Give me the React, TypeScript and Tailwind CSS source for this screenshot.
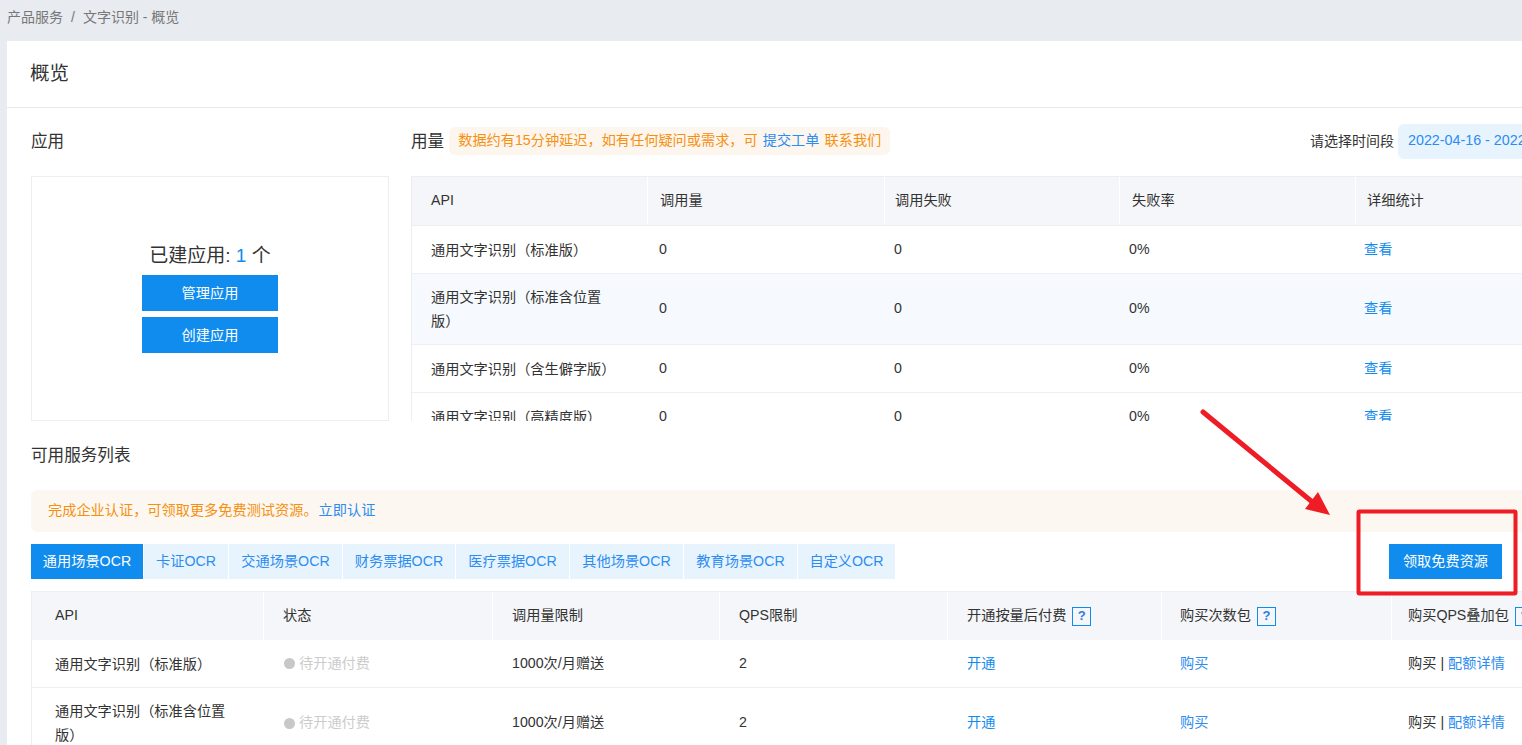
const font = '[font-family:"Liberation_Sans","Noto_Sans_CJK_SC",sans-serif]';

const usageRows = [
    { name: ['通用文字识别（标准版）'], tall: false, shade: false },
    { name: ['通用文字识别（标准含位置', '版）'], tall: true, shade: true },
    { name: ['通用文字识别（含生僻字版）'], tall: false, shade: false },
    { name: ['通用文字识别（高精度版）'], tall: false, shade: false },
];

const tabs = [
    { label: '通用场景OCR', width: 'w-[112px]', active: true },
    { label: '卡证OCR', width: 'w-[84px]', active: false },
    { label: '交通场景OCR', width: 'w-[113px]', active: false },
    { label: '财务票据OCR', width: 'w-[112px]', active: false },
    { label: '医疗票据OCR', width: 'w-[113px]', active: false },
    { label: '其他场景OCR', width: 'w-[113px]', active: false },
    { label: '教育场景OCR', width: 'w-[113px]', active: false },
    { label: '自定义OCR', width: 'w-[97px]', active: false },
];

const serviceRows = [
    { name: ['通用文字识别（标准版）'], tall: false },
    { name: ['通用文字识别（标准含位置', '版）'], tall: true },
];

function HelpBox() {
    return (
        <span className="ml-[6px] inline-flex h-[19px] w-[19px] items-center justify-center border border-[#108cee] text-[13px] font-bold text-[#2b7fe0]">
            ?
        </span>
    );
}

function HeadCell({ children, className }: { children: React.ReactNode; className: string }) {
    return <div className={`flex shrink-0 items-center border-r border-white ${className}`}>{children}</div>;
}

export default function App() {
    return (
        <div className={`relative h-[745px] w-[1522px] overflow-hidden bg-[#e8ebf0] text-[14.2px] text-[#333] ${font}`}>
            {/* Breadcrumb */}
            <div className="flex h-[41px] items-start pl-[7px] pt-[8px] text-[14px] leading-[18px] text-[#777]">
                <span>产品服务</span>
                <span className="mx-[8px]">/</span>
                <span>文字识别 - 概览</span>
            </div>

            <div className="ml-[7px] h-[704px] bg-white">
                <div className="flex h-[67px] items-center border-b border-[#e8e8e8] pl-[23px] text-[19.5px] text-[#333]">概览</div>

                {/* Apps and usage */}
                <div className="flex pl-[24px]">
                    <div className="w-[358px] shrink-0">
                        <div className="flex h-[68px] items-center text-[16.6px]">应用</div>
                        <div className="flex h-[245px] flex-col items-center border border-[#eeeeee] pt-[66px]">
                            <div className="text-[19px] leading-[26px] text-[#333]">
                                已建应用: <span className="text-[#108cee]">1</span> 个
                            </div>
                            <button className="mt-[6px] h-[36px] w-[136px] bg-[#108cee] pt-[2px] text-white">管理应用</button>
                            <button className="mt-[6px] h-[36px] w-[136px] bg-[#108cee] pt-[2px] text-white">创建应用</button>
                        </div>
                    </div>

                    <div className="ml-[22px] min-w-0 flex-1">
                        <div className="flex h-[68px] items-center pb-[2px]">
                            <span className="mt-[2px] text-[16.6px]">用量</span>
                            <span className="ml-[5px] flex h-[28px] items-center rounded-[6px] bg-[#fdf6ef] px-[9px] text-[#f7900f]">
                                数据约有15分钟延迟，如有任何疑问或需求，可<span className="mx-[5px] text-[#2d8cf0]">提交工单</span>联系我们
                            </span>
                            <span className="ml-[auto] text-[14px] text-[#333]">请选择时间段</span>
                            <span className="ml-[4px] flex h-[35px] w-[124px] shrink-0 items-center overflow-hidden whitespace-nowrap rounded-l-[6px] bg-[#e7f4fe] pl-[10px] text-[14.3px] text-[#2d8cf0]">
                                2022-04-16 - 2022-05-16
                            </span>
                        </div>

                        <div className="h-[245px] overflow-hidden border-l border-t border-[#eeeeee]">
                            <div className="flex h-[49px] border-b border-[#eeeeee] bg-[#f4f6f9] pb-[1px]">
                                <HeadCell className="w-[236px] pl-[19px]">API</HeadCell>
                                <HeadCell className="w-[237px] pl-[12px]">调用量</HeadCell>
                                <HeadCell className="w-[235px] pl-[10px]">调用失败</HeadCell>
                                <HeadCell className="w-[236px] pl-[12px]">失败率</HeadCell>
                                <div className="flex flex-1 items-center pl-[11px]">详细统计</div>
                            </div>
                            {usageRows.map((row) => (
                                <div
                                    key={row.name.join('')}
                                    className={`flex border-b border-[#eef0f5] ${row.tall ? 'h-[71px] bg-[#f6fafe]' : 'h-[48px]'}`}
                                >
                                    <div className="flex w-[236px] shrink-0 flex-col justify-center pl-[19px] leading-[24px]">
                                        {row.name.map((line) => (
                                            <span key={line}>{line}</span>
                                        ))}
                                    </div>
                                    <div className="flex w-[237px] shrink-0 items-center pl-[11px]">0</div>
                                    <div className="flex w-[235px] shrink-0 items-center pl-[9px]">0</div>
                                    <div className="flex w-[235px] shrink-0 items-center pl-[9px]">0%</div>
                                    <div className="flex flex-1 items-center pl-[9px] text-[#108cee]">查看</div>
                                </div>
                            ))}
                        </div>
                    </div>
                </div>

                {/* Service list */}
                <div className="pl-[24px]">
                    <div className="flex h-[69px] items-center pt-[2px] text-[16.6px]">可用服务列表</div>
                    <div className="flex h-[42px] items-center rounded-l-[6px] bg-[#fcf7f1] pb-[1px] pl-[17px] text-[#f7900f]">
                        完成企业认证，可领取更多免费测试资源。<span className="ml-[1px] text-[#2d8cf0]">立即认证</span>
                    </div>

                    <div className="mt-[12px] flex h-[35px]">
                        <div className="flex gap-px">
                            {tabs.map((tab) => (
                                <div
                                    key={tab.label}
                                    className={`flex items-center justify-center ${tab.width} ${
                                        tab.active ? 'bg-[#108cee] text-white' : 'bg-[#e7f4fe] text-[#2d8cf0]'
                                    }`}
                                >
                                    {tab.label}
                                </div>
                            ))}
                        </div>
                        <button className="ml-[494px] h-[35px] w-[113px] bg-[#108cee] text-white">领取免费资源</button>
                    </div>

                    <div className="mt-[12px] border-l border-t border-[#eeeeee]">
                        <div className="flex h-[48px] bg-[#f4f6f9]">
                            <HeadCell className="w-[232px] pl-[23px]">API</HeadCell>
                            <HeadCell className="w-[229px] pl-[19px]">状态</HeadCell>
                            <HeadCell className="w-[227px] pl-[19px]">调用量限制</HeadCell>
                            <HeadCell className="w-[228px] pl-[19px]">QPS限制</HeadCell>
                            <HeadCell className="w-[214px] pl-[19px]">
                                开通按量后付费
                                <HelpBox />
                            </HeadCell>
                            <HeadCell className="w-[230px] pl-[18px]">
                                购买次数包
                                <HelpBox />
                            </HeadCell>
                            <div className="flex flex-1 items-center whitespace-nowrap pl-[16px]">
                                购买QPS叠加包
                                <HelpBox />
                            </div>
                        </div>
                        {serviceRows.map((row) => (
                            <div
                                key={row.name.join('')}
                                className={`flex border-b border-[#eef0f5] ${row.tall ? 'h-[71px]' : 'h-[48px]'}`}
                            >
                                <div className="flex w-[232px] shrink-0 flex-col justify-center pl-[23px] leading-[24px]">
                                    {row.name.map((line) => (
                                        <span key={line}>{line}</span>
                                    ))}
                                </div>
                                <div className="flex w-[229px] shrink-0 items-center pl-[20px] text-[#cccccc]">
                                    <span className="mr-[4px] h-[11px] w-[11px] rounded-full bg-[#c8c8c8]" />
                                    待开通付费
                                </div>
                                <div className="flex w-[227px] shrink-0 items-center pl-[19px]">1000次/月赠送</div>
                                <div className="flex w-[228px] shrink-0 items-center pl-[19px]">2</div>
                                <div className="flex w-[214px] shrink-0 items-center pl-[19px] text-[#108cee]">开通</div>
                                <div className="flex w-[230px] shrink-0 items-center pl-[18px] text-[#2d8cf0]">购买</div>
                                <div className="flex flex-1 items-center whitespace-nowrap pl-[16px]">
                                    购买<span className="mx-[4px]">|</span>
                                    <span className="text-[#2d8cf0]">配额详情</span>
                                </div>
                            </div>
                        ))}
                    </div>
                </div>
            </div>

            {/* Red annotation drawn over the page */}
            <svg className="pointer-events-none absolute left-0 top-0" width="1522" height="745" viewBox="0 0 1522 745">
                <line x1="1203" y1="412" x2="1316" y2="505" stroke="#ee1c25" strokeWidth="5" strokeLinecap="round" />
                <polygon points="1330,515 1305,509 1318,492" fill="#ee1c25" />
                <rect x="1358.5" y="511.5" width="157" height="82" rx="1" fill="none" stroke="#ee1c25" strokeWidth="4" />
            </svg>
        </div>
    );
}
